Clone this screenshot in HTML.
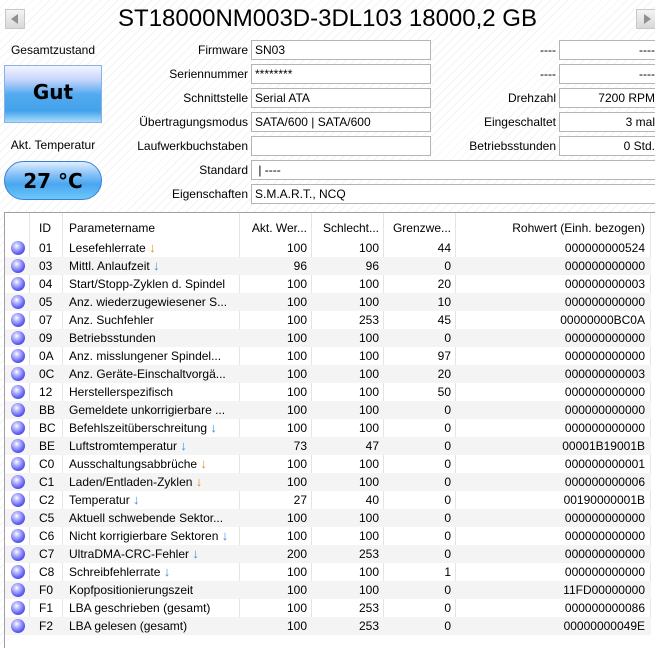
<!DOCTYPE html>
<html><head><meta charset="utf-8"><style>
*{margin:0;padding:0;box-sizing:border-box}
body{width:655px;height:648px;overflow:hidden;position:relative;font-family:"Liberation Sans","DejaVu Sans",sans-serif;font-size:12px;color:#000;
background:#fff repeating-linear-gradient(135deg,#fff 0,#fff 5px,#f3f3f3 5px,#f3f3f3 6px);}
.a{position:absolute}
.title{left:0;width:655px;top:3px;text-align:center;font-size:24px;line-height:32px}
.btn{width:20px;height:20px;top:9px;background:linear-gradient(#f4f4f4,#d8d8d8);border:1px solid #c8c8c8}
.lbl{text-align:right;line-height:20px;height:20px}
.fld{height:20px;border:1px solid #b4b4b4;background:#fff;line-height:18px;padding:0 3px;white-space:nowrap;overflow:hidden}
.r{text-align:right}
.gut{left:4px;top:65px;width:98px;height:58px;border:1px solid #8ab0e8;background:linear-gradient(#f4f6ff 0%,#c5d4fb 25%,#55aaf0 50%,#42a2ec 80%,#a9dcf8 100%);font-weight:bold;font-size:20px;text-align:center;line-height:52px;font-family:"DejaVu Sans",sans-serif}
.tmp{left:4px;top:161px;width:98px;height:39px;border-radius:20px;border:1px solid #3c7fd8;background:linear-gradient(#dfefff 0%,#8fc6f8 30%,#4aa6f0 60%,#6cc8f8 100%);font-weight:bold;font-size:20px;text-align:center;line-height:38px;font-family:"DejaVu Sans",sans-serif}
.tbl{left:4px;top:212px;width:651px;height:436px;border:1px solid #a0a0a0;border-right:none;border-bottom:none;background:#fff}
.row{position:absolute;left:0;height:18px;width:646px;font-size:12px;line-height:18px}
.row span{position:absolute;top:0;white-space:nowrap}
.alt{background:#f4f4f4}
.dot{width:14px;height:14px;border-radius:50%;top:2px!important;left:6px;background:radial-gradient(circle at 40% 35%,#fff 0,#b8b8ff 25%,#5a5af0 65%,#3030c0 100%)}
.o{color:#f08a20}.b{color:#3a90e0}
.vl{position:absolute;top:0;width:1px;height:408px;background:#e4e4e4}
</style></head><body>
<div class="a btn" style="left:5px"><div style="position:absolute;left:5px;top:4px;border:5px solid transparent;border-right:7px solid #909090;border-left:0"></div></div>
<div class="a btn" style="left:636px"><div style="position:absolute;left:7px;top:4px;border:5px solid transparent;border-left:7px solid #909090;border-right:0"></div></div>
<div class="a title">ST18000NM003D-3DL103 18000,2 GB</div>
<div class="a" style="left:0;width:106px;top:40px;text-align:center;line-height:20px">Gesamtzustand</div>
<div class="a gut">Gut</div>
<div class="a" style="left:0;width:106px;top:135px;text-align:center;line-height:20px">Akt. Temperatur</div>
<div class="a tmp">27 °C</div>

<div class="a lbl" style="left:110px;width:138px;top:40px">Firmware</div>
<div class="a lbl" style="left:110px;width:138px;top:64px">Seriennummer</div>
<div class="a lbl" style="left:110px;width:138px;top:88px">Schnittstelle</div>
<div class="a lbl" style="left:110px;width:138px;top:112px">Übertragungsmodus</div>
<div class="a lbl" style="left:110px;width:138px;top:136px">Laufwerkbuchstaben</div>
<div class="a lbl" style="left:110px;width:138px;top:160px">Standard</div>
<div class="a lbl" style="left:110px;width:138px;top:184px">Eigenschaften</div>
<div class="a fld" style="left:251px;width:180px;top:40px">SN03</div>
<div class="a fld" style="left:251px;width:180px;top:64px">********</div>
<div class="a fld" style="left:251px;width:180px;top:88px">Serial ATA</div>
<div class="a fld" style="left:251px;width:180px;top:112px">SATA/600 | SATA/600</div>
<div class="a fld" style="left:251px;width:180px;top:136px"></div>
<div class="a fld" style="left:251px;width:410px;top:160px">&nbsp;| ----</div>
<div class="a fld" style="left:251px;width:410px;top:184px">S.M.A.R.T., NCQ</div>

<div class="a lbl" style="left:440px;width:116px;top:40px">----</div>
<div class="a lbl" style="left:440px;width:116px;top:64px">----</div>
<div class="a lbl" style="left:440px;width:116px;top:88px">Drehzahl</div>
<div class="a lbl" style="left:440px;width:116px;top:112px">Eingeschaltet</div>
<div class="a lbl" style="left:440px;width:116px;top:136px">Betriebsstunden</div>
<div class="a fld r" style="left:559px;width:100px;top:40px">----</div>
<div class="a fld r" style="left:559px;width:100px;top:64px">----</div>
<div class="a fld r" style="left:559px;width:100px;top:88px">7200 RPM</div>
<div class="a fld r" style="left:559px;width:100px;top:112px">3 mal</div>
<div class="a fld r" style="left:559px;width:100px;top:136px">0 Std.</div>

<div class="a tbl" id="t">
<div class="vl" style="left:24px"></div><div class="vl" style="left:57px"></div><div class="vl" style="left:234px"></div><div class="vl" style="left:306px"></div><div class="vl" style="left:378px"></div><div class="vl" style="left:450px"></div><div class="vl" style="left:645px"></div>
<div class="row" style="top:6px;height:20px">
<span style="left:34px">ID</span><span style="left:64px">Parametername</span><span style="left:240px;width:62px;text-align:right">Akt. Wer...</span><span style="left:312px;width:62px;text-align:right">Schlecht...</span><span style="left:384px;width:62px;text-align:right">Grenzwe...</span><span style="left:456px;width:184px;text-align:right">Rohwert (Einh. bezogen)</span></div>
</div>
<script>
var d=[["01","Lesefehlerrate","o","100","100","44","000000000524"],["03","Mittl. Anlaufzeit","b","96","96","0","000000000000"],["04","Start/Stopp-Zyklen d. Spindel","","100","100","20","000000000003"],["05","Anz. wiederzugewiesener S...","","100","100","10","000000000000"],["07","Anz. Suchfehler","","100","253","45","00000000BC0A"],["09","Betriebsstunden","","100","100","0","000000000000"],["0A","Anz. misslungener Spindel...","","100","100","97","000000000000"],["0C","Anz. Geräte-Einschaltvorgä...","","100","100","20","000000000003"],["12","Herstellerspezifisch","","100","100","50","000000000000"],["BB","Gemeldete unkorrigierbare ...","","100","100","0","000000000000"],["BC","Befehlszeitüberschreitung","b","100","100","0","000000000000"],["BE","Luftstromtemperatur","b","73","47","0","00001B19001B"],["C0","Ausschaltungsabbrüche","o","100","100","0","000000000001"],["C1","Laden/Entladen-Zyklen","o","100","100","0","000000000006"],["C2","Temperatur","b","27","40","0","00190000001B"],["C5","Aktuell schwebende Sektor...","","100","100","0","000000000000"],["C6","Nicht korrigierbare Sektoren","b","100","100","0","000000000000"],["C7","UltraDMA-CRC-Fehler","b","200","253","0","000000000000"],["C8","Schreibfehlerrate","b","100","100","1","000000000000"],["F0","Kopfpositionierungszeit","","100","100","0","11FD00000000"],["F1","LBA geschrieben (gesamt)","","100","253","0","000000000086"],["F2","LBA gelesen (gesamt)","","100","253","0","00000000049E"]];
var h="";d.forEach(function(r,i){h+='<div class="row'+(i%2?' alt':'')+'" style="top:'+(26+i*18)+'px"><span class="dot"></span><span style="left:34px">'+r[0]+'</span><span style="left:64px">'+r[1]+(r[2]?' <b class="'+r[2]+'" style="font-weight:bold;font-size:13px">↓</b>':'')+'</span><span style="left:240px;width:62px;text-align:right">'+r[3]+'</span><span style="left:312px;width:62px;text-align:right">'+r[4]+'</span><span style="left:384px;width:62px;text-align:right">'+r[5]+'</span><span style="left:456px;width:184px;text-align:right">'+r[6]+'</span></div>';});
document.getElementById("t").insertAdjacentHTML("beforeend",h);
</script>
</body></html>
